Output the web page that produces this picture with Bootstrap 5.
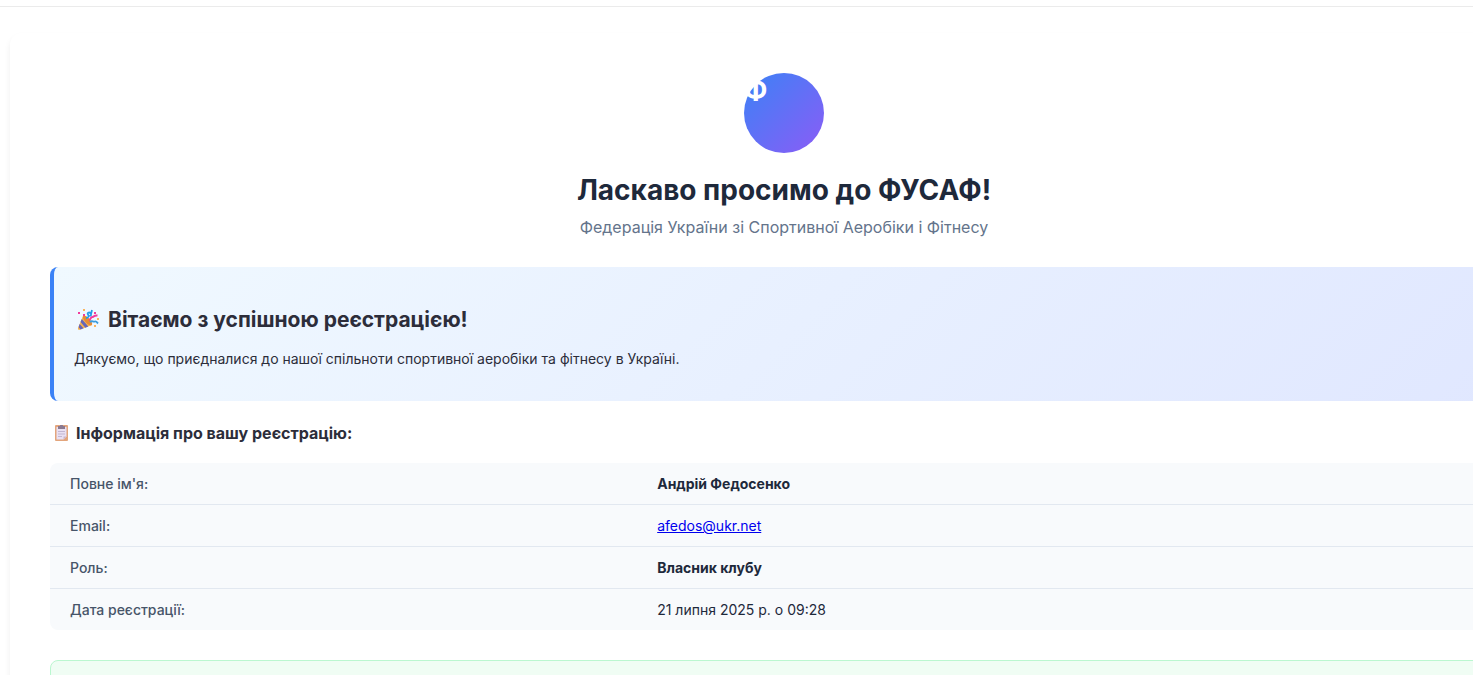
<!DOCTYPE html>
<html lang="uk">
<head>
<meta charset="utf-8">
<meta name="viewport" content="width=device-width, initial-scale=1">
<title>Ласкаво просимо до ФУСАФ!</title>
<link href="https://cdn.jsdelivr.net/npm/bootstrap@5.3.0/dist/css/bootstrap.min.css" rel="stylesheet">
<script src="https://cdn.jsdelivr.net/npm/bootstrap@5.3.0/dist/js/bootstrap.bundle.min.js" defer></script>
<style>
  body { font-family: Inter, "Liberation Sans", sans-serif; font-size: 14px; line-height: 24px; color: #2c2d3a; background: #fff; overflow: hidden; }
  .top-rule { height: 7px; border-bottom: 1px solid #ebebeb; }
  /* The message is wider than its pane, so it runs past the right edge */
  .message { margin: 26px -85px 0 10px; padding: 40px; border-radius: 12px; box-shadow: 0 4px 6px rgba(0, 0, 0, .07); }
  .logo { width: 80px; height: 80px; background: linear-gradient(135deg, #3b82f6, #8b5cf6); color: #fff; font-size: 28px; line-height: 34px; }
  .title { font-size: 28px; line-height: 34px; color: #1e293b; margin: 20px 0 8px; }
  .subtitle { font-size: 16px; line-height: 24px; color: #64748b; }
  .welcome { background: linear-gradient(135deg, #f0f9ff, #e0e7ff); border-left: 4px solid #3b82f6; border-radius: 8px; padding: 36px 20px 30px; margin-top: 28px; }
  .welcome h2 { font-size: 21px; line-height: 34px; gap: 9px; padding-left: 3px; margin-bottom: 10px; }
  .section-title { font-size: 16px; line-height: 26px; gap: 7px; padding-left: 4px; margin: 19px 0 17px; }
  .info { background: #f8fafc; border-radius: 8px; color: #1e293b; }
  .info th, .info td { padding: 9px 20px 8px; border-bottom: 1px solid #e2e8f0; }
  .info tr:last-child > * { border-bottom: 0; }
  .info th { width: 40%; font-weight: 500; color: #475569; }
  .info a { color: #0000ee; }
  .notice { min-height: 120px; margin-top: 30px; background: #f0fdf4; border: 1px solid #bbf7d0; border-radius: 8px; }
</style>
</head>
<body>
<div class="top-rule"></div>
<main class="message">
  <header class="text-center">
    <div class="logo rounded-circle mx-auto text-start fw-bold">Ф</div>
    <h1 class="title fw-bold">Ласкаво просимо до ФУСАФ!</h1>
    <p class="subtitle mb-0">Федерація України зі Спортивної Аеробіки і Фітнесу</p>
  </header>

  <section class="welcome">
    <h2 class="d-flex align-items-center fw-bold">
      <svg width="22" height="22" viewBox="0 0 22 22" aria-hidden="true">
        <path d="M6 7 1 19c-.4 1.300.5 2.300 1.800 1.800L15 16Z" fill="#f9b34c"/>
        <path d="m4.800 10 6.500 7.500-3 1.200L3.500 13Zm-2.200 5 4 4.300-3 1.300-2-2.300Z" fill="#6666b8"/>
        <ellipse cx="10.500" cy="11.500" rx="2.500" ry="6.300" transform="rotate(-43 10.500 11.500)" fill="#e68a36"/>
        <path d="M9 9c3 0 3-2 2-3.500C9.500 3.500 13 2.500 14 5c.4 1.500-.5 2-1.500 1.500M15 1l-1 4" fill="none" stroke="#249ce8" stroke-width="1.800"/>
        <path d="M12 11c2 0 1-3 3.500-3 2 0 1-2 5-1.500" fill="none" stroke="#f03c9c" stroke-width="2"/>
        <path d="M13 13c2-2 3 .5 5-.5 1.500-.5 2 1 3 2" fill="none" stroke="#3b9cdc" stroke-width="1.800"/>
        <path d="M1 3h2v2H1ZM6 5h2v2H6ZM17 3h2v2h-2Z" fill="#f03c9c"/>
        <path d="M6 0h2v2H6ZM20 9h2v2h-2ZM17 16h2v2h-2Z" fill="#f9b45c"/>
      </svg>
      <span>Вітаємо з успішною реєстрацією!</span>
    </h2>
    <p class="mb-0">Дякуємо, що приєдналися до нашої спільноти спортивної аеробіки та фітнесу в Україні.</p>
  </section>

  <h3 class="section-title d-flex align-items-center fw-bold">
    <svg width="15" height="16" viewBox="0 0 15 16" aria-hidden="true">
      <rect x="1" width="13" height="16" rx="1" fill="#e3a57c"/>
      <path d="M2.500 2h10v9.500l-3 3h-7Z" fill="#e9e0f2"/>
      <path d="M12.500 11.500h-3v3Z" fill="#cbb5cc"/>
      <path d="M4 1h2a1.500 1.500 0 0 1 3 0h2v3H4Z" fill="#8a7990"/>
      <path d="M4 6.500h7M4 9h7M4 11.500h4" stroke="#c3b6d2"/>
    </svg>
    <span>Інформація про вашу реєстрацію:</span>
  </h3>

  <table class="info w-100">
    <tbody>
      <tr><th scope="row">Повне ім'я:</th><td class="fw-bold">Андрій Федосенко</td></tr>
      <tr><th scope="row">Email:</th><td><a href="mailto:afedos@ukr.net">afedos@ukr.net</a></td></tr>
      <tr><th scope="row">Роль:</th><td class="fw-bold">Власник клубу</td></tr>
      <tr><th scope="row">Дата реєстрації:</th><td>21 липня 2025 р. о 09:28</td></tr>
    </tbody>
  </table>

  <section class="notice"></section>
</main>
</body>
</html>
